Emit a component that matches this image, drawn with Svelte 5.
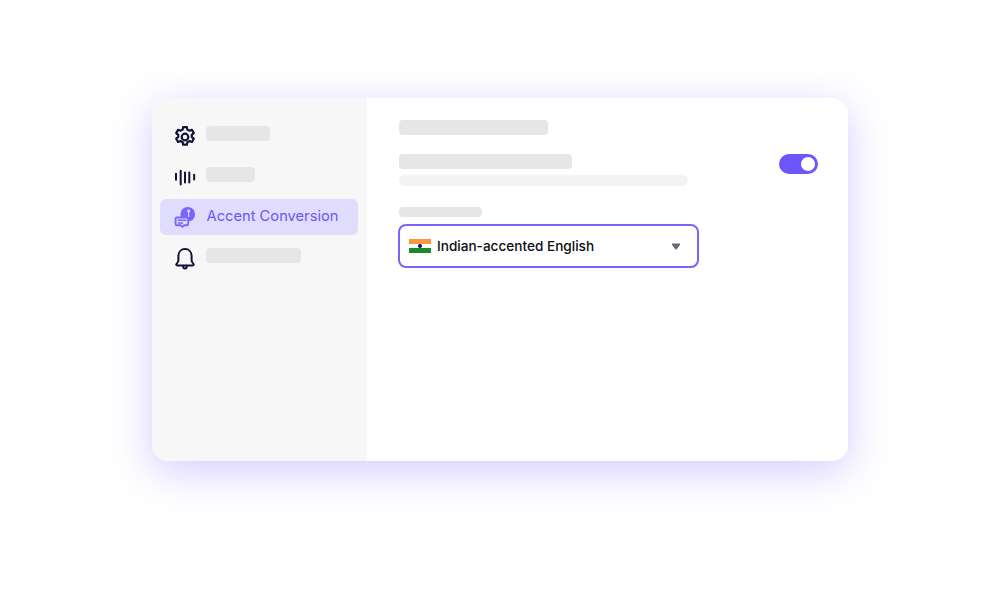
<script lang="ts">
  const skeletons = { settings: 64, voice: 49, alerts: 95 };
</script>

<div class="page">
  <div class="card">
    <aside class="sidebar">
      <div class="nav-row">
        <svg class="nav-icon" viewBox="2 2 20 20" fill="none" stroke="#14123a" stroke-width="2" stroke-linejoin="round" aria-hidden="true">
          <path d="M10.300 3h3.400l.5 2.400c.6.2 1.200.5 1.700.9l2.400-.8 1.700 3-1.900 1.600a7 7 0 0 1 0 1.800l1.900 1.600-1.700 3-2.400-.8c-.5.4-1.100.7-1.700.9l-.5 2.400h-3.400l-.5-2.400a7 7 0 0 1-1.700-.9l-2.400.8-1.700-3 1.900-1.600a7 7 0 0 1 0-1.800l-1.900-1.600 1.700-3 2.400.8c.5-.4 1.100-.7 1.700-.9z" />
          <circle cx="12" cy="12" r="3" />
        </svg>
        <span class="bar nav-bar" style={`width: ${skeletons.settings}px`}></span>
      </div>

      <div class="nav-row">
        <svg class="nav-icon" viewBox="0 0 24 24" fill="none" stroke="#14123a" stroke-width="2.200" stroke-linecap="round" aria-hidden="true">
          <path d="M2.200 7.500v6.500M7.300 4v15M12 6v11M16.700 6v11M22 8.500v5" />
        </svg>
        <span class="bar nav-bar" style={`width: ${skeletons.voice}px`}></span>
      </div>

      <div class="nav-row active">
        <svg class="nav-icon" viewBox="0 0 24 24" aria-hidden="true">
          <circle cx="15" cy="9" r="8" fill="#7a65fb" />
          <circle cx="16" cy="5.500" r="1.600" fill="#e0dcfd" />
          <path fill="none" stroke="#e0dcfd" stroke-width="1.200" d="M16 6.500v5.500" />
          <path fill="#e0dcfd" stroke="#7a65fb" stroke-width="2" stroke-linejoin="round" d="M3.200 12.500h10.800c.9 0 1.500.6 1.500 1.500v5.500c0 .9-.6 1.500-1.500 1.500h-2.800l-2 1.800-2-1.800H3.200c-.9 0-1.500-.6-1.500-1.500V14c0-.9.6-1.500 1.500-1.500z" />
          <path fill="none" stroke="#7a65fb" stroke-width="1.500" stroke-linecap="round" d="M4.500 15.500h8.500M4.500 18.500h5" />
        </svg>
        <span class="nav-label">Accent Conversion</span>
      </div>

      <div class="nav-row">
        <svg class="nav-icon" viewBox="0 0 24 24" fill="none" stroke="#14123a" stroke-width="2.200" stroke-linejoin="round" stroke-linecap="round" aria-hidden="true">
          <path d="M12 1.200c-4.200 0-7.200 3.200-7.200 7.600v4.500c0 1.600-.8 2.800-2 4-.7.8-.2 1.700.7 1.700h17c.9 0 1.400-.9.7-1.700-1.200-1.200-2-2.400-2-4V8.800c0-4.400-3-7.600-7.200-7.600z" />
          <path d="M10 19.500c0 1.800.8 2.800 2 2.800s2-1 2-2.800" />
        </svg>
        <span class="bar nav-bar" style={`width: ${skeletons.alerts}px`}></span>
      </div>
    </aside>

    <main class="content">
      <span class="bar title-bar"></span>

      <div class="setting">
        <div class="setting-text">
          <span class="bar heading-bar"></span>
          <span class="bar sub-bar"></span>
        </div>
        <div class="toggle"><span class="knob"></span></div>
      </div>

      <span class="bar label-bar"></span>

      <div class="select">
        <svg class="flag" viewBox="0 0 22 14" aria-hidden="true">
          <rect width="22" height="5" fill="#f9983c" />
          <rect y="5" width="22" height="4" fill="#fff" />
          <rect y="9" width="22" height="5" fill="#1a8a2c" />
          <circle cx="11" cy="7" r="2" fill="#10106e" />
        </svg>
        <span class="select-text">Indian-accented English</span>
        <svg class="caret" viewBox="0 0 10 7" aria-hidden="true">
          <path d="M1 1h8L5.500 6c-.3.300-.7.300-1 0z" fill="#6b6780" stroke="#6b6780" stroke-linejoin="round" />
        </svg>
      </div>
    </main>
  </div>
</div>

<style>
  :global(body) {
    margin: 0;
    background: #fff;
  }

  .page {
    box-sizing: border-box;
    width: 1000px;
    height: 600px;
    padding-top: 98px;
    display: flex;
    justify-content: center;
    align-items: flex-start;
    overflow: hidden;
    font-family: Inter, "Liberation Sans", sans-serif;
  }

  .card {
    width: 696px;
    height: 363px;
    display: flex;
    background: #fff;
    border-radius: 16px;
    overflow: hidden;
    box-shadow: 0 10px 40px rgba(108, 85, 251, 0.3);
  }

  .sidebar {
    box-sizing: border-box;
    width: 215px;
    padding: 20px 9px 0 8px;
    display: flex;
    flex-direction: column;
    gap: 4.500px;
    background: #f7f7f7;
  }

  .nav-row {
    height: 36px;
    flex: none;
    display: flex;
    align-items: flex-start;
    box-sizing: border-box;
    padding: 8px 0 0 14px;
    gap: 10px;
    border-radius: 6px;
  }

  .nav-icon {
    width: 22px;
    height: 22px;
    flex: none;
  }

  .nav-row.active {
    align-items: center;
    padding-top: 0;
    padding-left: 14px;
    gap: 10.500px;
    background: #e0dcfd;
  }

  .nav-label {
    margin-top: -3px;
    font-size: 14.700px;
    font-weight: 400;
    color: #6c55fb;
    white-space: nowrap;
  }

  .bar {
    display: block;
    background: #e6e6e8;
    border-radius: 4px;
  }

  .nav-bar {
    height: 15px;
  }

  .content {
    flex: 1;
    box-sizing: border-box;
    padding: 22px 30px 0 32px;
    display: flex;
    flex-direction: column;
    align-items: flex-start;
  }

  .title-bar {
    width: 149px;
    height: 15px;
  }

  .setting {
    align-self: stretch;
    margin-top: 19px;
    display: flex;
    justify-content: space-between;
    align-items: flex-start;
  }

  .setting-text {
    display: flex;
    flex-direction: column;
    gap: 6px;
  }

  .heading-bar {
    width: 173px;
    height: 15px;
  }

  .sub-bar {
    width: 289px;
    height: 11px;
    background: #f3f3f3;
    border-radius: 6px;
  }

  .toggle {
    box-sizing: border-box;
    width: 39px;
    height: 20px;
    padding: 3px;
    display: flex;
    justify-content: flex-end;
    background: #6c55fb;
    border-radius: 10px;
  }

  .knob {
    width: 14px;
    height: 14px;
    background: #fff;
    border-radius: 50%;
  }

  .label-bar {
    width: 83px;
    height: 10px;
    margin-top: 21px;
  }

  .select {
    box-sizing: border-box;
    width: 300.500px;
    height: 44px;
    margin-top: 7px;
    margin-left: -1px;
    padding: 0 15.500px 0 9px;
    display: flex;
    align-items: center;
    border: 2px solid #7a65fb;
    border-radius: 8px;
  }

  .flag {
    width: 22px;
    height: 14px;
    flex: none;
  }

  .select-text {
    margin-left: 6px;
    margin-top: -1px;
    flex: 1;
    font-size: 13.600px;
    font-weight: 500;
    color: #0c0c14;
    white-space: nowrap;
  }

  .caret {
    width: 10px;
    height: 7px;
    flex: none;
  }
</style>
